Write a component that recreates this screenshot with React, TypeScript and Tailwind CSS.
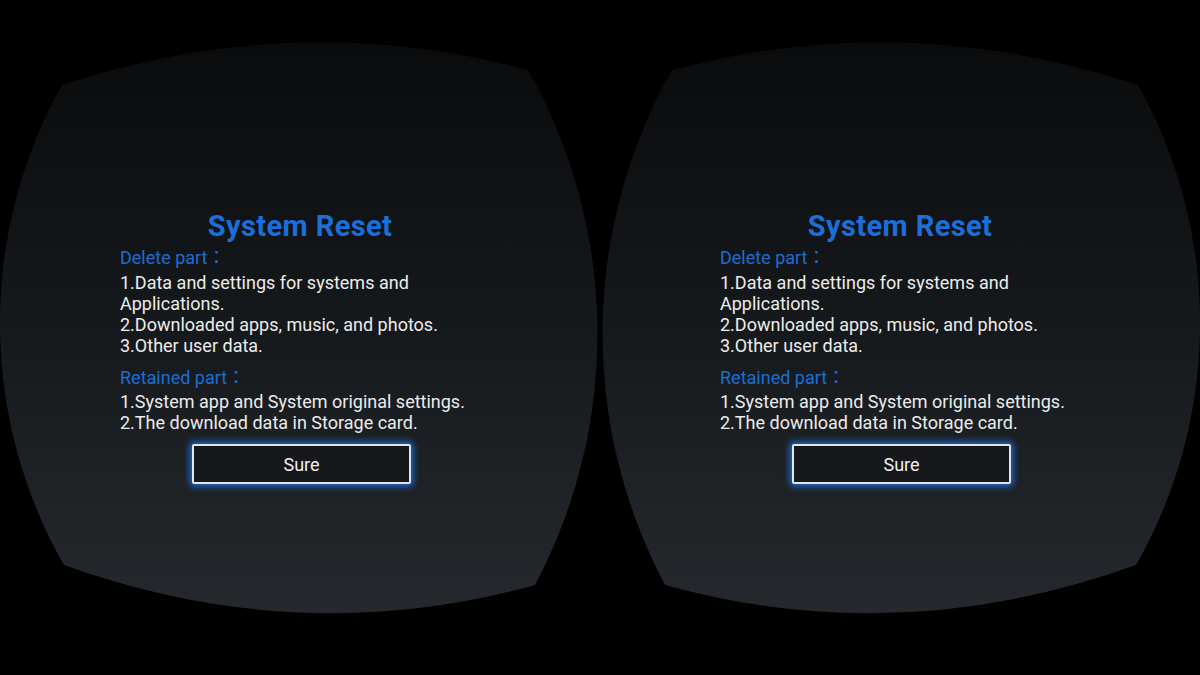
const deleted = [
  "1.Data and settings for systems and Applications.",
  "2.Downloaded apps, music, and photos.",
  "3.Other user data.",
];

const retained = [
  "1.System app and System original settings.",
  "2.The download data in Storage card.",
];

// barrel-distorted lens outline, drawn for the left eye and mirrored for the right
function Lens({ mirrored, id }: { mirrored?: boolean; id: string }) {
  return (
    <svg
      className="absolute inset-0"
      width="600"
      height="675"
      viewBox="0 0 600 675"
    >
      <defs>
        <linearGradient id={id} x1="0" y1="43" x2="0" y2="612" gradientUnits="userSpaceOnUse">
          <stop offset="0" stopColor="#0a0b0d" />
          <stop offset="0.5" stopColor="#16191c" />
          <stop offset="1" stopColor="#25292d" />
        </linearGradient>
      </defs>
      <g transform={mirrored ? "translate(600 0) scale(-1 1)" : undefined}>
        <path
          d="M62 85 Q295 8 528 70 A536 536 0 0 1 535 585 Q300 650 64 565 A488 488 0 0 1 62 85 Z"
          fill={`url(#${id})`}
        />
      </g>
    </svg>
  );
}

function Eye({ mirrored, id }: { mirrored?: boolean; id: string }) {
  return (
    <div className="relative w-[600px] h-[675px]">
      <Lens mirrored={mirrored} id={id} />

      <div className="relative ml-[120px] w-[360px] pt-[210px] flex flex-col">
        <h1 className="text-center text-[29px] leading-[33px] font-bold tracking-[0.4px] text-[#1b6fd9]">
          System Reset
        </h1>

        <p className="mt-[5px] text-[18px] leading-[20px] text-[#1e6dd2]">Delete part：</p>
        <div className="mt-[4px] text-[18px] leading-[21px] text-[#ececec]">
          {deleted.map((line) => (
            <p key={line}>{line}</p>
          ))}
        </div>

        <p className="mt-[12px] text-[18px] leading-[20px] text-[#1e6dd2]">Retained part：</p>
        <div className="mt-[3px] text-[18px] leading-[21px] text-[#ececec]">
          {retained.map((line) => (
            <p key={line}>{line}</p>
          ))}
        </div>

        <button className="mt-[11px] ml-[72px] w-[219px] h-[40px] flex items-center justify-center rounded-[2px] border-2 border-[#e2e6eb] bg-[#16181b] text-[18px] text-[#f2f2f2] shadow-[0_0_7px_2px_rgba(30,115,235,0.95)]">
          Sure
        </button>
      </div>
    </div>
  );
}

export default function App() {
  return (
    <div
      className="w-[1200px] h-[675px] bg-black flex overflow-hidden"
      style={{ fontFamily: 'Roboto, "Noto Sans CJK TC", sans-serif' }}
    >
      <Eye id="lens-left" />
      <Eye id="lens-right" mirrored />
    </div>
  );
}
